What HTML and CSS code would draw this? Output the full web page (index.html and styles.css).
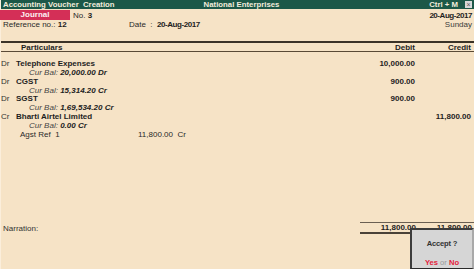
FILE: index.html
```html
<!DOCTYPE html>
<html>
<head>
<meta charset="utf-8">
<link rel="stylesheet" href="styles.css">
</head>
<body>
<div class="page">
  <div class="titlebar">
    <span class="t-left">Accounting Voucher&nbsp; Creation</span>
    <span class="t-mid">National Enterprises</span>
    <span class="t-right"><span>Ctrl + M</span><span class="closebox">×</span></span>
  </div>
  <div class="head">
    <div class="head-left">
      <div class="row1"><span class="vtype">Journal</span><span class="no">No. <b>3</b></span></div>
      <div class="row2"><span class="ref">Reference no.: <b>12</b></span><span class="date">Date&nbsp; : &nbsp;<b class="narrow">20-Aug-2017</b></span></div>
    </div>
    <div class="head-right">
      <div class="rdate"><b class="narrow">20-Aug-2017</b></div>
      <div class="rday">Sunday</div>
    </div>
  </div>
  <div class="colhead">
    <span class="c-part">Particulars</span>
    <span class="c-amt">Debit</span>
    <span class="c-amt">Credit</span>
  </div>
  <div class="entries">
    <div class="line"><span class="part"><span class="drcr">Dr</span><b>Telephone Expenses</b></span><span class="amt">10,000.00</span><span class="amt"></span></div>
    <div class="line"><span class="part bal"><i>Cur Bal:</i> <b><i>20,000.00 Dr</i></b></span></div>
    <div class="line"><span class="part"><span class="drcr">Dr</span><b>CGST</b></span><span class="amt">900.00</span><span class="amt"></span></div>
    <div class="line"><span class="part bal"><i>Cur Bal:</i> <b><i>15,314.20 Cr</i></b></span></div>
    <div class="line"><span class="part"><span class="drcr">Dr</span><b>SGST</b></span><span class="amt">900.00</span><span class="amt"></span></div>
    <div class="line"><span class="part bal"><i>Cur Bal:</i> <b><i>1,69,534.20 Cr</i></b></span></div>
    <div class="line"><span class="part"><span class="drcr">Cr</span><b>Bharti Airtel Limited</b></span><span class="amt"></span><span class="amt">11,800.00</span></div>
    <div class="line"><span class="part bal"><i>Cur Bal:</i> <b><i>0.00 Cr</i></b></span></div>
    <div class="line"><span class="part agst"><span class="agst-l">Agst Ref&nbsp; 1</span><span class="agst-a">11,800.00&nbsp; Cr</span></span></div>
  </div>
  <div class="footer">
    <span class="narr">Narration:</span>
    <div class="totals">
      <span class="amt">11,800.00</span>
      <span class="amt">11,800.00</span>
    </div>
  </div>
  <div class="accept">
    <div class="acc-q">Accept ?</div>
    <div class="acc-yn"><span class="red">Yes</span> <span class="or">or</span> <span class="red">No</span></div>
  </div>
</div>
</body>
</html>
```
FILE: styles.css
```css
* { box-sizing: border-box; margin: 0; padding: 0; }
html, body { width: 474px; height: 269px; overflow: hidden; }
body {
  font-family: "Liberation Sans", Arial, sans-serif;
  font-size: 8px;
  color: #2a2a2a;
  background: #f6e3c6;
}
b { font-weight: bold; color: #1e1e1e; }
.page {
  position: relative;
  width: 474px;
  height: 269px;
  display: flex;
  flex-direction: column;
  border-left: 1px solid #fbeedb;
}
.titlebar {
  height: 9px;
  background: #1c5848;
  color: #f2ecdc;
  font-weight: bold;
  font-size: 7.8px;
  line-height: 9px;
  display: grid;
  grid-template-columns: 1fr auto 1fr;
  padding: 0 2px 0 2px;
}
.t-mid { padding-left: 8px; }
.t-right { display: flex; justify-content: flex-end; align-items: center; gap: 7px; }
.closebox {
  width: 7px; height: 7px;
  background: #d8d8d8;
  color: #555;
  font-size: 7px;
  line-height: 7px;
  text-align: center;
  font-weight: normal;
}
.head {
  display: flex;
  justify-content: space-between;
  padding-top: 1px;
  height: 32px;
}
.row1 { display: flex; height: 10px; align-items: center; }
.vtype {
  width: 70px; height: 10px;
  background: #d42f57;
  color: #fdf1f4;
  font-weight: bold;
  text-align: center;
  line-height: 10px;
  margin-left: -1px;
}
.no { margin-left: 3px; }
.row2 { display: flex; height: 10px; line-height: 10px; padding-left: 2px; }
.ref { width: 126px; }
.narrow { letter-spacing: -0.45px; }
.head-right { text-align: right; padding-right: 2px; line-height: 9px; padding-top: 1px; }
.rday { color: #3a3a3a; }
.colhead {
  border-top: 2px solid #3b3328;
  border-bottom: 1px solid #5a4a36;
  height: 11px;
  line-height: 9px;
  display: grid;
  grid-template-columns: 1fr 60px 56px;
  padding-right: 3px;
  font-weight: bold;
  color: #1e1e1e;
}
.c-part { padding-left: 20px; }
.c-amt { text-align: right; }
.entries { margin-top: 8px; }
.line {
  height: 8.85px;
  line-height: 8.85px;
  display: grid;
  grid-template-columns: 1fr 60px 56px;
  padding-right: 3px;
  white-space: nowrap;
}
.amt { text-align: right; font-weight: bold; color: #1e1e1e; }
.drcr { display: inline-block; width: 15px; color: #333; }
.bal { padding-left: 28px; color: #444; }
.bal b { color: #222; }
.agst { padding-left: 19px; display: flex; }
.agst-l { width: 118px; }
.footer {
  margin-top: auto;
  margin-bottom: 35px;
  display: flex;
  justify-content: space-between;
  align-items: center;
  padding-left: 2px;
}
.narr { color: #333; }
.totals {
  width: 114px;
  height: 12px;
  border-top: 1.5px solid #6a5f52;
  border-bottom: 2px solid #4a4238;
  display: grid;
  grid-template-columns: 1fr 56px;
  padding-right: 2px;
  line-height: 9px;
}
.accept {
  position: absolute;
  right: 0;
  bottom: 0;
  width: 64px;
  height: 41px;
  background: #d6d6d6;
  border: 2px solid #3c3c3c;
  border-right: 2px solid #a9a9a9;
  border-bottom: 1.5px solid #2a2a2a;
  text-align: center;
  font-weight: bold;
}
.acc-q { margin-top: 9px; color: #333; font-size: 7.6px; line-height: 9px; letter-spacing: -0.2px; }
.acc-yn { margin-top: 10px; font-size: 7.6px; line-height: 9px; }
.red { color: #e4223b; }
.or { color: #9a9a9a; font-weight: normal; }
```
